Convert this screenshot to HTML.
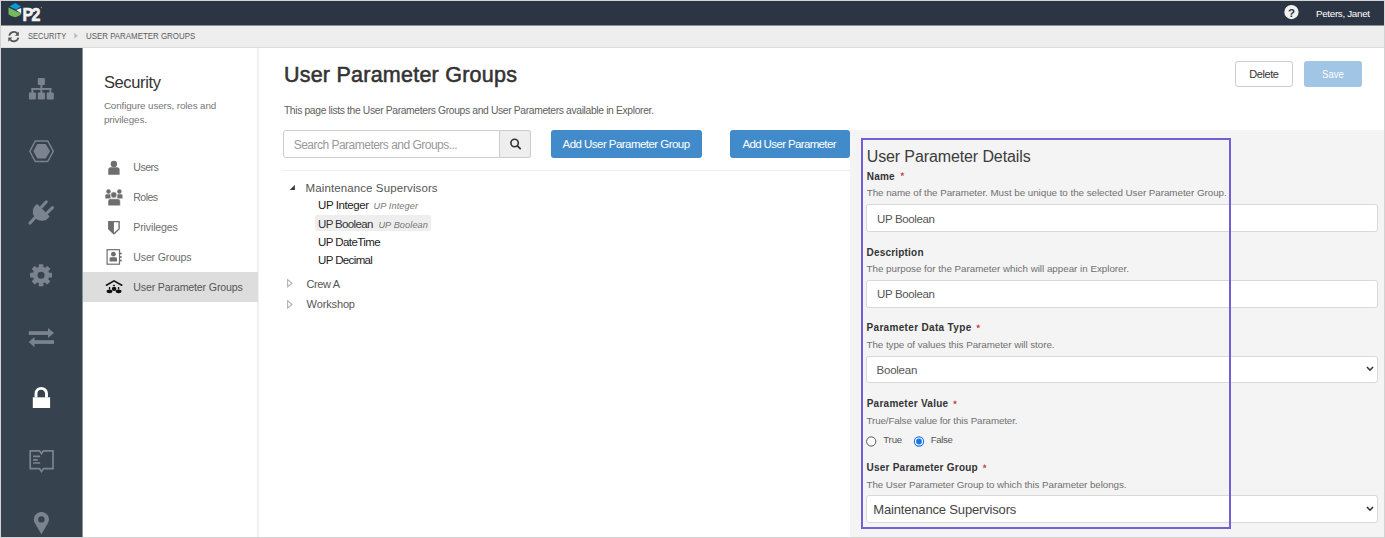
<!DOCTYPE html>
<html><head><meta charset="utf-8">
<style>
html,body{margin:0;padding:0;}
body{width:1385px;height:538px;position:relative;overflow:hidden;background:#d3d3d3;font-family:"Liberation Sans",sans-serif;}
.a{position:absolute;box-sizing:border-box;}
.t{position:absolute;white-space:pre;font-family:"Liberation Sans",sans-serif;}
svg.ov{position:absolute;left:0;top:0;overflow:visible;}
</style></head><body>
<!-- app frame -->
<div class="a" style="left:1px;top:1px;width:1383px;height:536px;background:#ffffff;"></div>
<!-- header -->
<div class="a" style="left:1px;top:1px;width:1383px;height:24px;background:#2b3543;"></div>
<!-- breadcrumb -->
<div class="a" style="left:1px;top:25px;width:1383px;height:23px;background:#eeeeee;border-bottom:1px solid #dcdcdc;"></div>
<div class="a" style="left:1px;top:25px;width:1383px;height:1px;background:#8c929a;"></div>
<!-- sidebar -->
<div class="a" style="left:1px;top:48px;width:81px;height:489px;background:#36434f;"></div>
<div class="a" style="left:82px;top:48px;width:1px;height:489px;background:#8a929a;"></div>
<!-- secondary nav border -->
<div class="a" style="left:257px;top:48px;width:2px;height:489px;background:#f0f0f0;"></div>
<!-- selected menu bg -->
<div class="a" style="left:83px;top:272px;width:175px;height:30px;background:#dddddd;"></div>
<!-- tree separator -->
<div class="a" style="left:283px;top:170px;width:567px;height:1px;background:#eeeeee;"></div>
<!-- gray detail panel -->
<div class="a" style="left:850px;top:130px;width:534px;height:407px;background:#f4f4f4;"></div>

<!-- search input -->
<div class="a" style="left:283px;top:130px;width:248px;height:28px;border:1px solid #cccccc;border-radius:3px;background:#fff;"></div>
<div class="a" style="left:499px;top:130px;width:32px;height:28px;border:1px solid #cccccc;border-radius:0 3px 3px 0;background:#eeeeee;"></div>

<!-- buttons -->
<div class="a" style="left:551px;top:130px;width:151px;height:28px;background:#428bca;border-radius:3px;"></div>
<div class="a" style="left:730px;top:130px;width:120px;height:28px;background:#428bca;border-radius:3px;"></div>
<div class="a" style="left:1235px;top:61px;width:58px;height:26px;background:#fff;border:1px solid #cccccc;border-radius:3px;"></div>
<div class="a" style="left:1304px;top:61px;width:58px;height:26px;background:#a1c5e5;border-radius:3px;"></div>

<!-- tree highlight -->
<div class="a" style="left:315px;top:215px;width:116px;height:16px;background:#eeeeee;border-radius:2px;"></div>

<!-- purple frame -->
<div class="a" style="left:861px;top:138px;width:370px;height:391px;border:2px solid #7260d6;"></div>

<!-- inputs -->
<div class="a" style="left:866px;top:204px;width:512px;height:28px;background:#fff;border:1px solid #d9d9d9;border-radius:3px;"></div>
<div class="a" style="left:866px;top:280px;width:512px;height:28px;background:#fff;border:1px solid #d9d9d9;border-radius:3px;"></div>
<div class="a" style="left:866px;top:356px;width:512px;height:27px;background:#fff;border:1px solid #d9d9d9;border-radius:3px;"></div>
<div class="a" style="left:866px;top:495px;width:512px;height:28px;background:#fff;border:1px solid #d9d9d9;border-radius:3px;"></div>
<!-- re-draw purple right border over inputs -->
<div class="a" style="left:1229px;top:138px;width:2px;height:391px;background:#7260d6;"></div>

<svg class="ov" width="1385" height="538" viewBox="0 0 1385 538">
  <!-- search icon -->
  <circle cx="514.6" cy="143" r="3.7" fill="none" stroke="#333" stroke-width="1.6"/>
  <line x1="517.4" y1="145.8" x2="520.2" y2="148.6" stroke="#333" stroke-width="1.8" stroke-linecap="round"/>
  <!-- tree triangles -->
  <path d="M294.9 184.7 L294.9 189.9 L289.7 189.9 Z" fill="#3a3a3a"/>
  <path d="M287.6 279.6 L292 283.2 L287.6 286.8 Z" fill="none" stroke="#b4b4b4" stroke-width="1.1"/>
  <path d="M287.6 300.8 L292 304.4 L287.6 308 Z" fill="none" stroke="#b4b4b4" stroke-width="1.1"/>
  <!-- chevrons -->
  <path d="M1367 367 L1370 370.2 L1373 367" fill="none" stroke="#333" stroke-width="1.6"/>
  <path d="M1367 507 L1370 510.2 L1373 507" fill="none" stroke="#333" stroke-width="1.6"/>

  <!-- asterisks -->
  <path d="M902.30 171.80 L902.92 173.35 L904.58 173.46 L903.30 174.52 L903.71 176.14 L902.30 175.25 L900.89 176.14 L901.30 174.52 L900.02 173.46 L901.68 173.35 Z" fill="#c0504d"/>
  <path d="M978.20 324.00 L978.82 325.55 L980.48 325.66 L979.20 326.72 L979.61 328.34 L978.20 327.45 L976.79 328.34 L977.20 326.72 L975.92 325.66 L977.58 325.55 Z" fill="#c0504d"/>
  <path d="M955.00 400.00 L955.62 401.55 L957.28 401.66 L956.00 402.72 L956.41 404.34 L955.00 403.45 L953.59 404.34 L954.00 402.72 L952.72 401.66 L954.38 401.55 Z" fill="#c0504d"/>
  <path d="M984.60 464.00 L985.22 465.55 L986.88 465.66 L985.60 466.72 L986.01 468.34 L984.60 467.45 L983.19 468.34 L983.60 466.72 L982.32 465.66 L983.98 465.55 Z" fill="#c0504d"/>
  <!-- radios -->
  <circle cx="871.2" cy="441.5" r="4.6" fill="#fff" stroke="#555" stroke-width="1"/>
  <circle cx="919" cy="441.5" r="4.6" fill="#fff" stroke="#1a73e8" stroke-width="1.1"/>
  <circle cx="919" cy="441.5" r="2.9" fill="#1a73e8"/>

  <!-- breadcrumb refresh icon -->
  <path d="M9.3 35.6 A4.6 4.6 0 0 1 17.4 33.6" fill="none" stroke="#555" stroke-width="1.8"/>
  <path d="M18.9 31.6 L18.9 35.8 L14.9 35.8 Z" fill="#555"/>
  <path d="M18.3 37.6 A4.6 4.6 0 0 1 10.2 39.6" fill="none" stroke="#555" stroke-width="1.8"/>
  <path d="M8.3 37.4 L8.3 41.7 L12.3 37.4 Z" fill="#555"/>
  <path d="M74.4 33 L77.8 35.7 L74.4 38.4 Z" fill="#b8b8b8"/>

  <!-- header logo -->
  <path d="M15.3 2.9 L21 6.5 L16 9.4 L9.3 6.5 Z" fill="#0a9ad7"/>
  <path d="M8.5 7.4 L21.2 13.6 L21 14.3 Q18.5 17 15.3 17.2 Q11.5 17 8.5 14.2 Z" fill="#76b85e"/>
  <path d="M16.3 10 L21.2 8 L21.2 13.4 Z" fill="#f2f2f2"/>
  <text transform="translate(22.6,21) scale(0.86,1)" x="0" y="0" font-family="Liberation Sans" font-weight="700" font-size="18.6" fill="#f2f2f2" stroke="#f2f2f2" stroke-width="0.7" letter-spacing="-1.9">P2</text>
  <circle cx="41.3" cy="7.6" r="0.6" fill="#aaa"/>

  <!-- help icon -->
  <circle cx="1291.45" cy="12.05" r="7.15" fill="#f2f2f2"/>
  <text x="1291.5" y="16.5" text-anchor="middle" font-family="Liberation Sans" font-weight="700" font-size="11.5" fill="#2b3543">?</text>

  <!-- sidebar: sitemap -->
  <g fill="#7b848e">
    <rect x="37.8" y="78" width="7.1" height="7" rx="1"/>
    <rect x="40.4" y="84.5" width="1.9" height="4.5"/>
    <rect x="31.4" y="88" width="19.9" height="1.9"/>
    <rect x="31.4" y="88" width="1.9" height="5"/>
    <rect x="40.4" y="88" width="1.9" height="5"/>
    <rect x="49.4" y="88" width="1.9" height="5"/>
    <rect x="28.9" y="92.4" width="7" height="7.2" rx="1"/>
    <rect x="37.8" y="92.4" width="7.1" height="7.2" rx="1"/>
    <rect x="46.7" y="92.4" width="7.1" height="7.2" rx="1"/>
  </g>
  <!-- hexagon -->
  <path d="M35.3 141 L47.7 141 L53.3 151.3 L47.7 161.5 L35.3 161.5 L29.8 151.3 Z" fill="none" stroke="#7b848e" stroke-width="1.4"/>
  <path d="M37.3 144 L45.7 144 L50.1 151.3 L45.7 158.5 L37.3 158.5 L33.4 151.3 Z" fill="#7b848e"/>
  <!-- plug -->
  <g fill="#7b848e">
    <path d="M49.6 216.3 A9 9 0 1 1 37.24 204.05 Z"/>
  </g>
  <g stroke="#7b848e" stroke-width="3" stroke-linecap="round">
    <line x1="41.5" y1="207" x2="46.3" y2="201.8"/>
    <line x1="47" y1="213" x2="52.5" y2="207.6"/>
    <line x1="35.5" y1="217" x2="29.9" y2="223.2"/>
  </g>
  <!-- gear -->
  <g fill="#7b848e" transform="translate(41.05,275.15)">
    <rect x="-2.3" y="-11" width="4.6" height="22" rx="0.6"/>
    <rect x="-2.3" y="-11" width="4.6" height="22" rx="0.6" transform="rotate(45)"/>
    <rect x="-2.3" y="-11" width="4.6" height="22" rx="0.6" transform="rotate(90)"/>
    <rect x="-2.3" y="-11" width="4.6" height="22" rx="0.6" transform="rotate(135)"/>
    <circle r="8.3"/>
  </g>
  <circle cx="41.05" cy="275.15" r="3.5" fill="#36434f"/>
  <!-- arrows -->
  <g fill="#7b848e">
    <rect x="28.8" y="331.2" width="20" height="3.7"/>
    <path d="M48 328.1 L54 332.9 L48 337.9 Z"/>
    <rect x="34" y="340.2" width="20" height="3.7"/>
    <path d="M34.5 337 L28.8 342 L34.5 347.2 Z"/>
  </g>
  <!-- lock -->
  <path d="M36 397.5 L36 393.6 A5.2 5.2 0 0 1 46.5 393.6 L46.5 397.5" fill="none" stroke="#ffffff" stroke-width="2.9"/>
  <rect x="32.8" y="397.3" width="17.3" height="10.7" fill="#ffffff"/>
  <!-- book -->
  <g fill="none" stroke="#7b848e" stroke-width="1.7">
    <path d="M30.2 450.8 L39.5 450.8 L41.5 453.5 L43.5 450.8 L53 450.8 L53 468.6 L43.5 468.6 L41.5 471.5 L39.5 468.6 L30.2 468.6 Z"/>
    <path d="M33.1 456.4 L40.1 456.4 M33.1 459.8 L37.8 459.8 M33.1 463 L40.1 463"/>
  </g>
  <!-- pin -->
  <path d="M41.4 534.2 L34.8 523 A7.5 7.5 0 1 1 48 523 Z" fill="#7b848e"/>
  <circle cx="41.4" cy="519.4" r="3.2" fill="#36434f"/>

  <!-- secondary nav: users -->
  <g fill="#6e6e6e">
    <circle cx="113.9" cy="163.9" r="3.2"/>
    <path d="M108.25 174.75 L108.25 169.8 Q108.25 167.2 110.8 167.2 L117 167.2 Q119.6 167.2 119.6 169.8 L119.6 174.75 Z"/>
  </g>
  <!-- roles -->
  <g fill="#6e6e6e">
    <circle cx="108.5" cy="191.5" r="2.2"/>
    <circle cx="119.4" cy="191.5" r="2.2"/>
    <path d="M105.3 198.5 L105.3 195.6 Q105.3 194.2 106.7 194.2 L110.5 194.2 L110.5 198.5 Z"/>
    <path d="M122.5 198.5 L122.5 195.6 Q122.5 194.2 121.1 194.2 L117.3 194.2 L117.3 198.5 Z"/>
    <circle cx="113.8" cy="194.9" r="3.1" stroke="#fff" stroke-width="0.6"/>
    <path d="M108 205.8 L108 201.3 Q108 198.8 110.5 198.8 L117.8 198.8 Q120.3 198.8 120.3 201.3 L120.3 205.8 Z" stroke="#fff" stroke-width="0.5"/>
  </g>
  <!-- privileges shield -->
  <path d="M108.8 221.6 L119.1 221.6 L119.1 229 L113.95 233.8 L108.8 229 Z" fill="#fff" stroke="#6e6e6e" stroke-width="1.4"/>
  <path d="M108.8 221.6 L113.95 221.6 L113.95 233.8 L108.8 229 Z" fill="#6e6e6e"/>
  <!-- user groups -->
  <rect x="107.1" y="249.7" width="12.4" height="14.5" fill="#fff" stroke="#6e6e6e" stroke-width="1.2"/>
  <g fill="#6e6e6e">
    <circle cx="120.8" cy="253.6" r="1"/><circle cx="120.8" cy="257" r="1"/><circle cx="120.8" cy="260.4" r="1"/>
    <circle cx="113.4" cy="254.2" r="2.4"/>
    <path d="M109.6 261.6 L109.6 258.6 Q109.6 257.2 111 257.2 L115.6 257.2 Q117 257.2 117 258.6 L117 261.6 Z"/>
  </g>
  <!-- user parameter groups -->
  <path d="M106.4 285.2 L114 280.9 L121.8 285.2" fill="none" stroke="#111" stroke-width="1.6" stroke-linecap="round" stroke-linejoin="miter"/>
  <g fill="#111">
    <ellipse cx="114" cy="285.5" rx="1.1" ry="0.75"/>
    <ellipse cx="114.1" cy="288.9" rx="2.3" ry="2.1"/>
    <rect x="108.9" y="287" width="1.3" height="2.5"/>
    <ellipse cx="109.5" cy="291.3" rx="2.9" ry="1.9"/>
    <rect x="117.9" y="287" width="1.3" height="2.5"/>
    <ellipse cx="118.6" cy="291.3" rx="2.9" ry="1.9"/>
  </g>
</svg>

<div class="t" id="tx0" style="left:1316.00px;top:9.20px;font-size:9.8px;line-height:9.8px;color:#ffffff;letter-spacing:-0.311px;">Peters, Janet</div>
<div class="t" id="tx1" style="left:27.50px;top:31.12px;font-size:9.9px;line-height:9.9px;color:#5c5c5c;transform:scaleX(0.7650);transform-origin:0 0;">SECURITY</div>
<div class="t" id="tx2" style="left:86.30px;top:31.12px;font-size:9.9px;line-height:9.9px;color:#5c5c5c;transform:scaleX(0.8003);transform-origin:0 0;">USER PARAMETER GROUPS</div>
<div class="t" id="tx3" style="left:103.90px;top:73.93px;font-size:16.5px;line-height:16.5px;color:#333333;letter-spacing:-0.373px;">Security</div>
<div class="t" id="tx4" style="left:103.90px;top:101.00px;font-size:9.8px;line-height:9.8px;color:#777777;letter-spacing:-0.104px;">Configure users, roles and</div>
<div class="t" id="tx5" style="left:103.90px;top:114.60px;font-size:9.8px;line-height:9.8px;color:#777777;letter-spacing:-0.111px;">privileges.</div>
<div class="t" id="tx6" style="left:133.30px;top:161.53px;font-size:10.6px;line-height:10.6px;color:#6e6e6e;letter-spacing:-0.518px;">Users</div>
<div class="t" id="tx7" style="left:133.30px;top:191.53px;font-size:10.6px;line-height:10.6px;color:#6e6e6e;letter-spacing:-0.598px;">Roles</div>
<div class="t" id="tx8" style="left:133.30px;top:221.53px;font-size:10.6px;line-height:10.6px;color:#6e6e6e;letter-spacing:-0.149px;">Privileges</div>
<div class="t" id="tx9" style="left:133.30px;top:251.53px;font-size:10.6px;line-height:10.6px;color:#6e6e6e;letter-spacing:-0.176px;">User Groups</div>
<div class="t" id="tx10" style="left:133.30px;top:281.53px;font-size:10.6px;line-height:10.6px;color:#555555;letter-spacing:-0.148px;">User Parameter Groups</div>
<div class="t" id="tx11" style="left:283.90px;top:64.60px;font-size:21.5px;line-height:21.5px;color:#333333;letter-spacing:0.239px;-webkit-text-stroke:0.55px #333333;">User Parameter Groups</div>
<div class="t" id="tx12" style="left:283.90px;top:105.88px;font-size:10.3px;line-height:10.3px;color:#606060;letter-spacing:-0.344px;">This page lists the User Parameters Groups and User Parameters available in Explorer.</div>
<div class="t" id="tx13" style="left:293.70px;top:139.14px;font-size:12px;line-height:12px;color:#999999;letter-spacing:-0.514px;">Search Parameters and Groups...</div>
<div class="t" id="tx14" style="left:562.60px;top:138.97px;font-size:11.5px;line-height:11.5px;color:#ffffff;letter-spacing:-0.543px;">Add User Parameter Group</div>
<div class="t" id="tx15" style="left:742.50px;top:138.97px;font-size:11.5px;line-height:11.5px;color:#ffffff;letter-spacing:-0.637px;">Add User Parameter</div>
<div class="t" id="tx16" style="left:1249.30px;top:69.29px;font-size:11px;line-height:11px;color:#333333;letter-spacing:-0.439px;">Delete</div>
<div class="t" id="tx17" style="left:1322.00px;top:69.29px;font-size:11px;line-height:11px;color:#ffffff;transform:scaleX(0.8693);transform-origin:0 0;">Save</div>
<div class="t" id="tx18" style="left:305.60px;top:182.52px;font-size:11.5px;line-height:11.5px;color:#555555;letter-spacing:0.102px;">Maintenance Supervisors</div>
<div class="t" id="tx19" style="left:318.10px;top:199.57px;font-size:11.5px;line-height:11.5px;color:#222222;letter-spacing:-0.418px;">UP Integer</div>
<div class="t" id="tx20" style="left:373.60px;top:201.51px;font-size:9.2px;line-height:9.2px;color:#777777;font-style:italic;letter-spacing:0.091px;">UP Integer</div>
<div class="t" id="tx21" style="left:318.10px;top:219.37px;font-size:11.5px;line-height:11.5px;color:#333333;letter-spacing:-0.652px;">UP Boolean</div>
<div class="t" id="tx22" style="left:378.40px;top:221.31px;font-size:9.2px;line-height:9.2px;color:#777777;font-style:italic;letter-spacing:0.089px;">UP Boolean</div>
<div class="t" id="tx23" style="left:318.10px;top:237.07px;font-size:11.5px;line-height:11.5px;color:#222222;letter-spacing:-0.579px;">UP DateTime</div>
<div class="t" id="tx24" style="left:318.10px;top:254.57px;font-size:11.5px;line-height:11.5px;color:#222222;letter-spacing:-0.633px;">UP Decimal</div>
<div class="t" id="tx25" style="left:306.60px;top:279.49px;font-size:11px;line-height:11px;color:#555555;letter-spacing:-0.414px;">Crew A</div>
<div class="t" id="tx26" style="left:306.60px;top:298.79px;font-size:11px;line-height:11px;color:#555555;letter-spacing:-0.133px;">Workshop</div>
<div class="t" id="tx27" style="left:866.70px;top:148.96px;font-size:16px;line-height:16px;color:#3c3c3c;letter-spacing:-0.109px;">User Parameter Details</div>
<div class="t" id="tx28" style="left:866.70px;top:172.03px;font-size:10px;line-height:10px;color:#333333;font-weight:700;letter-spacing:0.250px;">Name</div>
<div class="t" id="tx29" style="left:866.70px;top:188.10px;font-size:9.8px;line-height:9.8px;color:#707070;letter-spacing:-0.034px;">The name of the Parameter. Must be unique to the selected User Parameter Group.</div>
<div class="t" id="tx30" style="left:877.00px;top:213.77px;font-size:11.5px;line-height:11.5px;color:#555555;letter-spacing:-0.352px;">UP Boolean</div>
<div class="t" id="tx31" style="left:866.50px;top:247.53px;font-size:10px;line-height:10px;color:#333333;font-weight:700;letter-spacing:0.198px;">Description</div>
<div class="t" id="tx32" style="left:866.50px;top:264.00px;font-size:9.8px;line-height:9.8px;color:#707070;letter-spacing:-0.009px;">The purpose for the Parameter which will appear in Explorer.</div>
<div class="t" id="tx33" style="left:877.00px;top:288.77px;font-size:11.5px;line-height:11.5px;color:#555555;letter-spacing:-0.352px;">UP Boolean</div>
<div class="t" id="tx34" style="left:866.50px;top:323.34px;font-size:10px;line-height:10px;color:#333333;font-weight:700;letter-spacing:0.331px;">Parameter Data Type</div>
<div class="t" id="tx35" style="left:866.50px;top:339.70px;font-size:9.8px;line-height:9.8px;color:#707070;letter-spacing:-0.046px;">The type of values this Parameter will store.</div>
<div class="t" id="tx36" style="left:876.60px;top:364.67px;font-size:11.5px;line-height:11.5px;color:#555555;letter-spacing:-0.253px;">Boolean</div>
<div class="t" id="tx37" style="left:866.70px;top:398.94px;font-size:10px;line-height:10px;color:#333333;font-weight:700;letter-spacing:0.255px;">Parameter Value</div>
<div class="t" id="tx38" style="left:866.50px;top:416.20px;font-size:9.8px;line-height:9.8px;color:#707070;letter-spacing:-0.125px;">True/False value for this Parameter.</div>
<div class="t" id="tx39" style="left:883.20px;top:434.57px;font-size:9.6px;line-height:9.6px;color:#555555;letter-spacing:-0.125px;">True</div>
<div class="t" id="tx40" style="left:930.80px;top:434.57px;font-size:9.6px;line-height:9.6px;color:#555555;letter-spacing:-0.367px;">False</div>
<div class="t" id="tx41" style="left:866.50px;top:462.94px;font-size:10px;line-height:10px;color:#333333;font-weight:700;letter-spacing:0.236px;">User Parameter Group</div>
<div class="t" id="tx42" style="left:866.50px;top:479.70px;font-size:9.8px;line-height:9.8px;color:#707070;letter-spacing:-0.063px;">The User Parameter Group to which this Parameter belongs.</div>
<div class="t" id="tx43" style="left:873.30px;top:503.40px;font-size:13px;line-height:13px;color:#444444;letter-spacing:-0.168px;">Maintenance Supervisors</div>
</body></html>
